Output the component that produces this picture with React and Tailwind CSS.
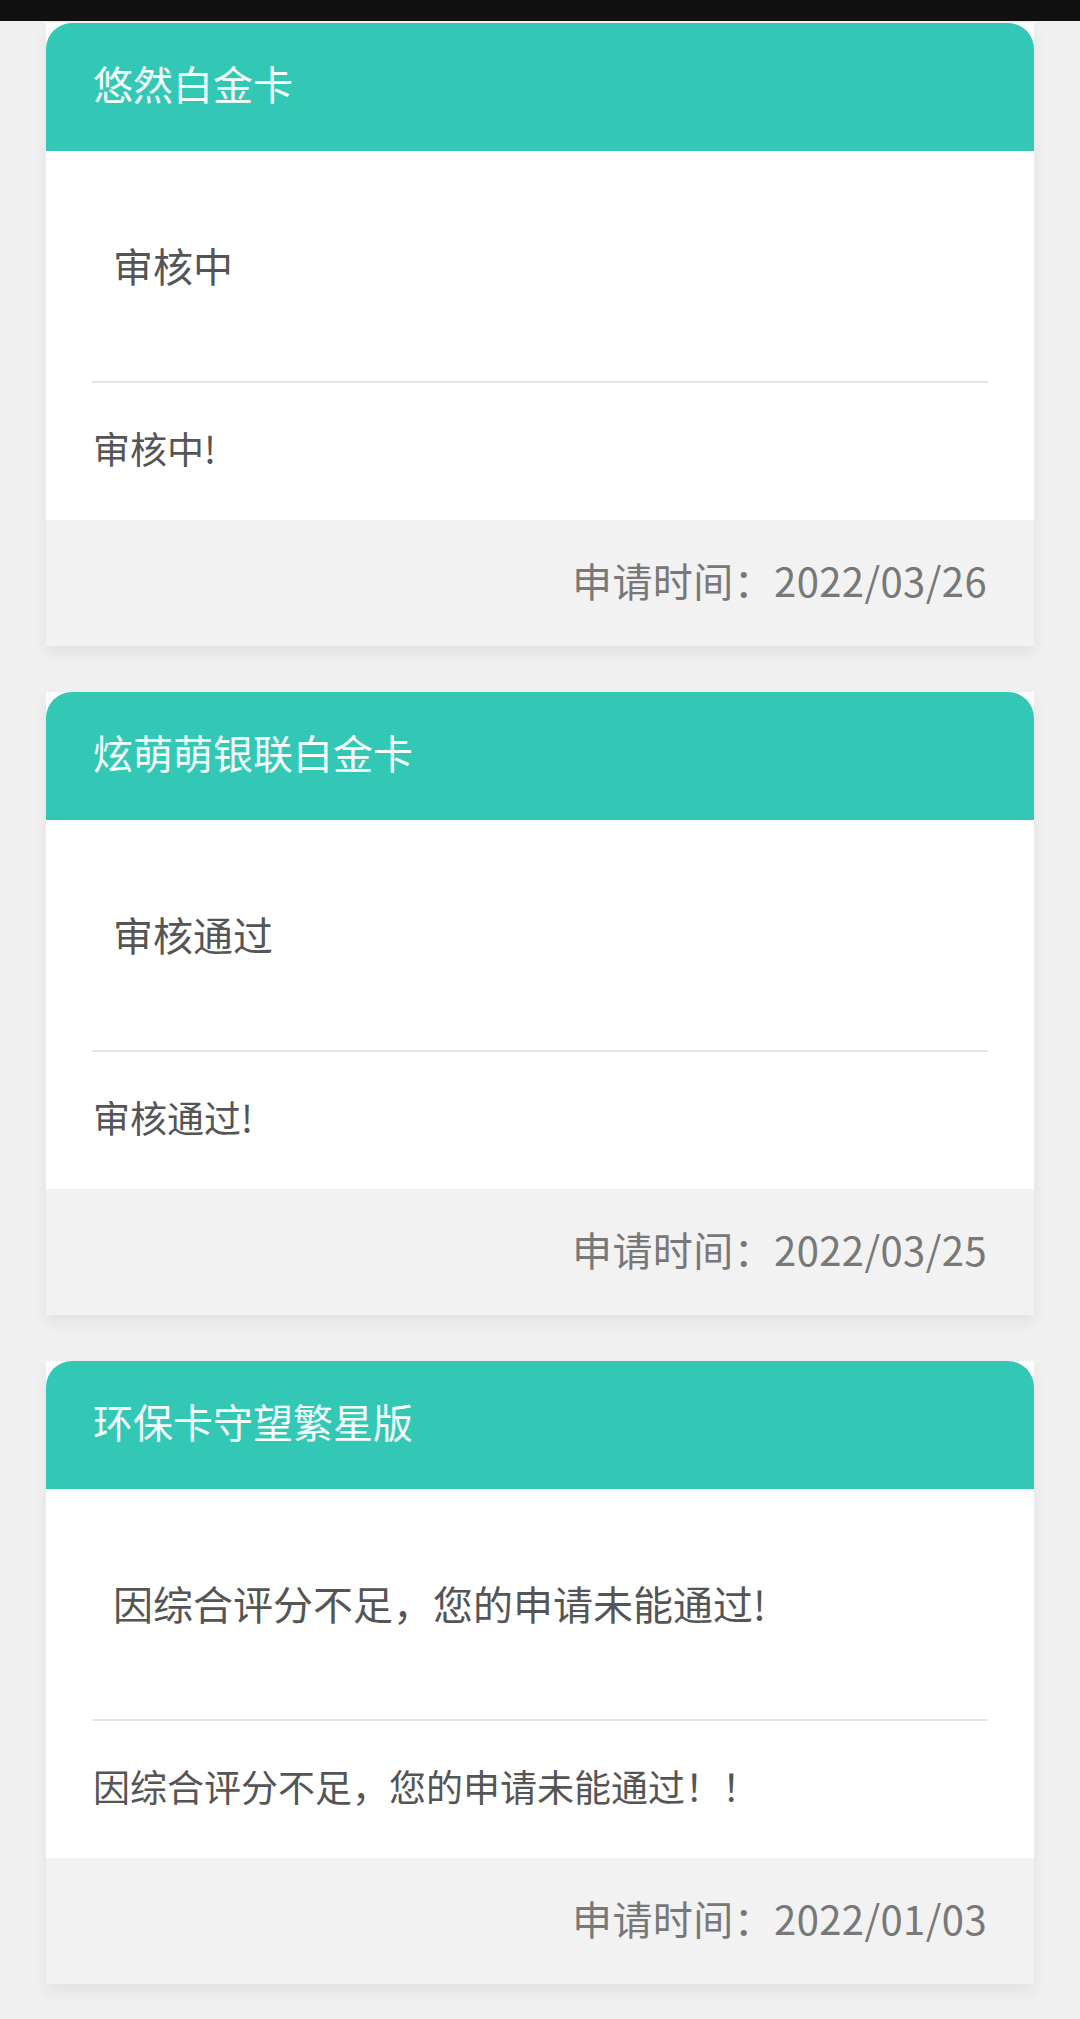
import React from 'react';

const applications = [
  { id: 1, name: '悠然白金卡', status: '审核中', remark: '审核中!', date: '2022/03/26' },
  { id: 2, name: '炫萌萌银联白金卡', status: '审核通过', remark: '审核通过!', date: '2022/03/25' },
  {
    id: 3,
    name: '环保卡守望繁星版',
    status: '因综合评分不足，您的申请未能通过!',
    remark: '因综合评分不足，您的申请未能通过！！',
    date: '2022/01/03',
  },
];

const ApplyCard = ({ item }) => {
  return (
    <div className="bg-white shadow-[0_8px_14px_rgba(0,0,0,0.06)]">
      <div className="h-[128px] rounded-t-[26px] bg-[#33c8b5] flex items-center pl-[47px] pb-[9px] text-[40px] text-[#f4fffc]">
        {item.name}
      </div>
      <div className="h-[230px] flex items-center pl-[67px] pb-[2px] text-[40px] text-[#555555]">
        {item.status}
      </div>
      <div className="mx-[46px] h-[2px] bg-[#e4e4e4]"></div>
      <div className="h-[137px] flex items-center px-[47px] pb-[7px] text-[37px] text-[#555555]">
        {item.remark}
      </div>
      <div className="h-[126px] bg-[#f2f2f2] flex items-center justify-end pr-[47px] pb-[7px] text-[40px] tracking-[0.4px] text-[#787878]">
        申请时间：{item.date}
      </div>
    </div>
  );
};

const App = () => {
  return (
    <div
      className="min-h-screen bg-[#f0f0f0] leading-none"
      style={{ fontFamily: '"Noto Sans CJK SC", "Noto Sans", sans-serif' }}
    >
      <div className="h-[21px] bg-[#111111]"></div>
      <div className="flex flex-col gap-[46px] px-[46px] pt-[2px] pb-[37px]">
        {applications.map((item) => (
          <ApplyCard key={item.id} item={item} />
        ))}
      </div>
    </div>
  );
};

export default App;
